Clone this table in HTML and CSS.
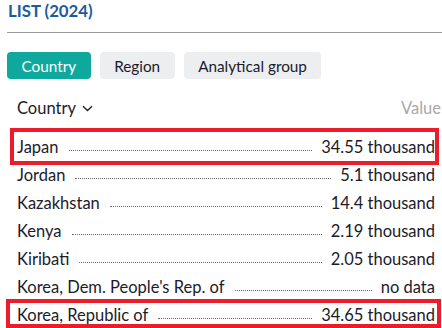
FILE: index.html
```html
<!DOCTYPE html>
<html>
<head>
<meta charset="utf-8">
<link rel="stylesheet" href="styles.css">
</head>
<body>
<div class="panel">
  <h2 class="title">LIST (2024)</h2>
  <div class="rule"></div>
  <div class="tabs">
    <span class="tab active">Country</span>
    <span class="tab">Region</span>
    <span class="tab">Analytical group</span>
  </div>
  <div class="list-head">
    <span class="sort">Country
      <svg class="chev" width="11" height="7" viewBox="0 0 11 7"><path d="M1 1.2 L5.5 5.6 L10 1.2" fill="none" stroke="#222" stroke-width="1.4"/></svg>
    </span>
    <span class="vh">Value</span>
  </div>
  <ul class="rows">
    <li class="row"><span class="name">Japan</span><span class="leader"></span><span class="val">34.55 thousand</span></li>
    <li class="row"><span class="name">Jordan</span><span class="leader"></span><span class="val">5.1 thousand</span></li>
    <li class="row"><span class="name">Kazakhstan</span><span class="leader"></span><span class="val">14.4 thousand</span></li>
    <li class="row"><span class="name">Kenya</span><span class="leader"></span><span class="val">2.19 thousand</span></li>
    <li class="row"><span class="name">Kiribati</span><span class="leader"></span><span class="val">2.05 thousand</span></li>
    <li class="row"><span class="name">Korea, Dem. People's Rep. of</span><span class="leader"></span><span class="val">no data</span></li>
    <li class="row"><span class="name">Korea, Republic of</span><span class="leader"></span><span class="val">34.65 thousand</span></li>
  </ul>
  <div class="mark mark-1"></div>
  <div class="mark mark-2"></div>
</div>
</body>
</html>
```
FILE: styles.css
```css
html, body {
  margin: 0;
  padding: 0;
  background: #fff;
}
body {
  font-family: Lato, "Noto Sans", sans-serif;
  color: #1b1b2a;
  width: 442px;
  height: 328px;
  overflow: hidden;
}
.panel {
  position: relative;
  height: 328px;
}
.title {
  margin: 0;
  padding: 1px 0 0 8px;
  height: 28px;
  box-sizing: border-box;
  font-size: 16.8px;
  font-weight: 700;
  color: #1d5aa3;
  line-height: 20px;
}
.rule {
  margin: 4px 0 0 7px;
  height: 1px;
  background: #9a9a9a;
}
.tabs {
  display: flex;
  gap: 9px;
  margin: 19px 0 0 7px;
}
.tab {
  display: flex;
  align-items: center;
  justify-content: center;
  height: 27px;
  padding: 0 14.5px;
  border-radius: 4px;
  background: #edeef0;
  font-size: 15.3px;
  color: #1b1b2a;
}
.tab.active {
  background: #0fa89c;
  color: #fff;
}
.list-head {
  display: flex;
  justify-content: space-between;
  align-items: center;
  margin: 12px 1px 0 17px;
  height: 34px;
  font-size: 16.5px;
}
.sort {
  display: flex;
  align-items: center;
  gap: 6px;
}
.chev {
  display: block;
  margin-top: 1px;
}
.vh {
  color: #a9a9a9;
}
.rows {
  list-style: none;
  margin: 8px 0 0 0;
  padding: 0 7px 0 17px;
}
.row {
  display: flex;
  align-items: baseline;
  height: 28px;
  line-height: 28px;
  font-size: 16.5px;
}
.leader {
  flex: 1;
  margin: 0 9px 0 10px;
  border-bottom: 1px dotted #6f6f6f;
  transform: translateY(-2px);
}
.name, .val {
  white-space: nowrap;
}
.mark {
  position: absolute;
  border: 4px solid #ec1c2a;
  box-sizing: border-box;
}
.mark-1 {
  left: 10px;
  top: 128px;
  width: 429px;
  height: 37px;
}
.mark-2 {
  left: 6px;
  top: 299px;
  width: 435px;
  height: 29px;
}
```
